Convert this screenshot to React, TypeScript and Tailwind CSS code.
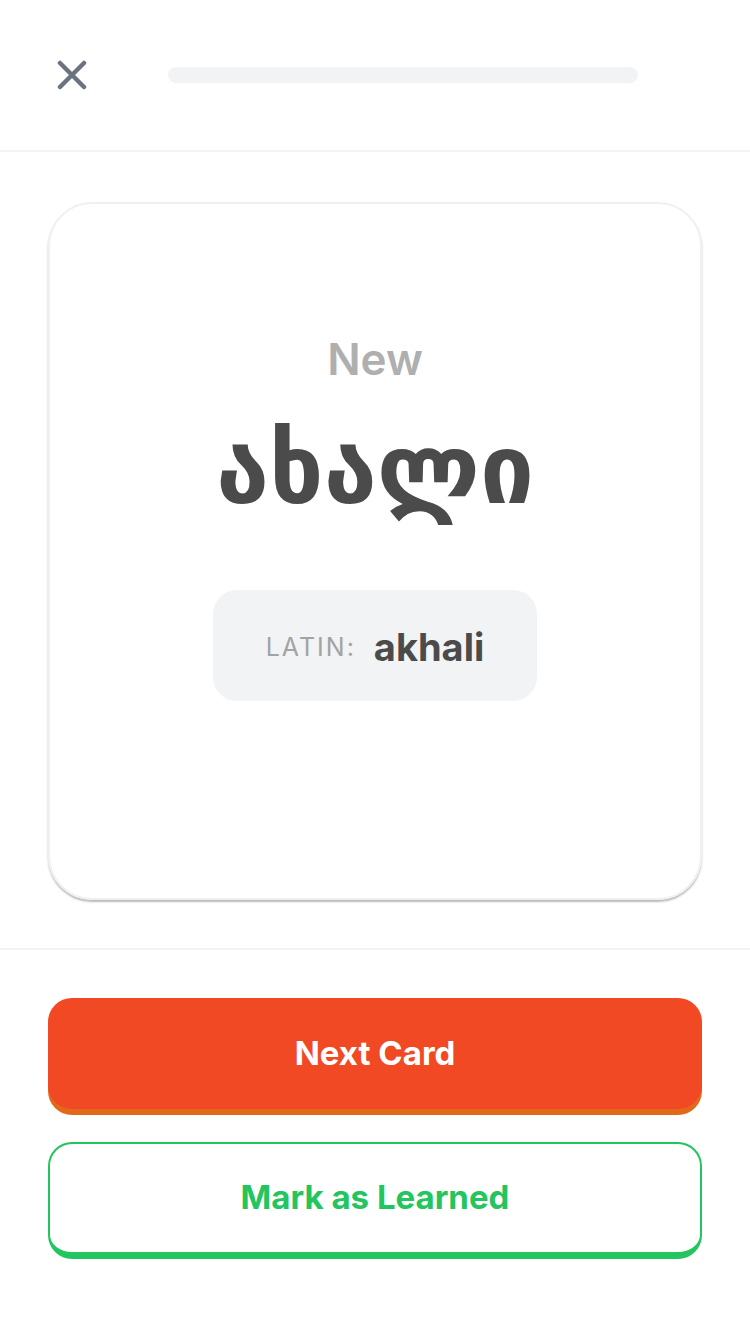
const FONT = "font-['Inter','DejaVu_Sans',sans-serif]";

const CloseIcon = () => (
  <svg width="30" height="30" viewBox="0 0 30 30" fill="none">
    <path d="M3 3L27 27M27 3L3 27" stroke="#6b7280" strokeWidth="4.5" strokeLinecap="round" />
  </svg>
);

const App = () => {
  return (
    <div className={`w-[750px] h-[1334px] bg-white flex flex-col ${FONT}`}>
      {/* top bar */}
      <div className="h-[152px] flex items-center px-[57px] border-b-2 border-[#f3f3f3]">
        <button className="w-[30px] h-[30px] flex items-center justify-center">
          <CloseIcon />
        </button>
        <div className="ml-[81px] w-[470px] h-[16px] rounded-full bg-[#f2f3f5]" />
      </div>

      {/* card */}
      <div className="px-[48px] pt-[50px] pb-[48px] border-b-2 border-[#f3f3f3]">
        <div className="h-[698px] rounded-[44px] border-2 border-[#f0f0f0] shadow-[0_2px_2px_rgba(0,0,0,0.28)] flex flex-col items-center pt-[130px]">
          <div className="text-[44px] leading-[50px] font-semibold text-[#afafaf]">New</div>
          <div className="mt-[36px] text-[96px] leading-[100px] font-bold text-[#4b4b4b] font-['DejaVu_Sans',sans-serif]">
            ახალი
          </div>
          <div className="mt-[70px] w-[324px] h-[111px] rounded-[24px] bg-[#f2f3f5] flex items-center justify-center gap-[18px] pt-[4px]">
            <span className="text-[25px] tracking-[2px] text-[#a3a3a3]">LATIN:</span>
            <span className="text-[38px] font-bold text-[#4b4b4b]">akhali</span>
          </div>
        </div>
      </div>

      {/* actions */}
      <div className="px-[48px] pt-[48px] flex flex-col gap-[33px]">
        <button className="h-[111px] rounded-[24px] bg-[#f04923] shadow-[0_6px_0_#e2691a] text-white text-[33px] font-bold flex items-center justify-center">
          Next Card
        </button>
        <button className="h-[117px] rounded-[24px] bg-white border-2 border-b-[7px] border-[#22c55e] text-[#22c55e] text-[33px] font-bold flex items-center justify-center">
          Mark as Learned
        </button>
      </div>
    </div>
  );
};

export default App;
